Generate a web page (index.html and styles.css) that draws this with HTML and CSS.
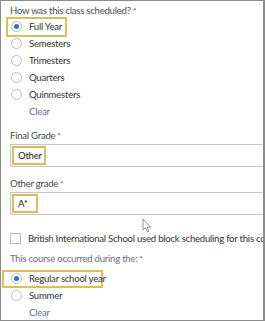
FILE: index.html
```html
<!DOCTYPE html>
<html lang="en">
<head>
  <meta charset="UTF-8">
  <title>Course form</title>
  <link rel="stylesheet" href="styles.css">
</head>
<body>
  <div class="frame">
    <div class="field">
      <p class="label">How was this class scheduled? <span class="req">*</span></p>
      <div class="option"><span class="hl hl-radio"><span class="radio checked"></span>Full Year</span></div>
      <div class="option"><span class="radio"></span>Semesters</div>
      <div class="option"><span class="radio"></span>Trimesters</div>
      <div class="option"><span class="radio"></span>Quarters</div>
      <div class="option"><span class="radio"></span>Quinmesters</div>
      <a class="clear" href="#">Clear</a>
    </div>

    <div class="field">
      <p class="label">Final Grade <span class="req">*</span></p>
      <div class="input"><span class="hl hl-input hl-other">Other</span></div>
    </div>

    <div class="field">
      <p class="label">Other grade <span class="req">*</span></p>
      <div class="input"><span class="hl hl-input hl-grade">A*</span></div>
      <!-- mouse pointer over the page -->
      <svg class="cursor" width="11" height="16" viewBox="0 0 11 16">
        <path d="M1 1 L1 12 L3.5 9.5 L5.5 14 L7 13.3 L5 9 L8.5 9 Z" fill="#fff" stroke="#777" stroke-width="0.8"/>
      </svg>
    </div>

    <div class="check-row">
      <span class="checkbox"></span>British International School used block scheduling for this course
    </div>

    <div class="field field-period">
      <p class="label faded">This course occurred during the: <span class="req">*</span></p>
      <div class="option first"><span class="hl hl-wide"><span class="radio checked"></span>Regular school year</span></div>
      <div class="option"><span class="radio"></span>Summer</div>
      <a class="clear" href="#">Clear</a>
    </div>
  </div>
</body>
</html>
```

FILE: styles.css
```css
body {
  margin: 0;
  font-family: 'Lato', 'Liberation Sans', sans-serif;
  font-size: 9.6px;
  letter-spacing: -0.25px;
  color: #333;
  background: #fff;
}
.frame {
  box-sizing: border-box;
  width: 265px;
  height: 321px;
  border: 1px solid #8c8c8c;
  border-right-width: 2px;
  padding: 2px 0 0 9px;
  overflow: hidden;
  position: relative;
}
.field {
  position: relative;
}
.label {
  margin: 0;
  height: 15px;
  line-height: 15px;
  color: #4a4a4a;
  white-space: nowrap;
}
.label.faded {
  color: #6e6e80;
}
.req {
  color: #c0392b;
  font-size: 8px;
}
.option {
  display: flex;
  align-items: center;
  height: 17px;
  white-space: nowrap;
}
.radio {
  box-sizing: border-box;
  width: 11px;
  height: 11px;
  border: 1px solid #bbb;
  border-radius: 50%;
  margin: 0 7px 0 1px;
  flex: none;
  position: relative;
}
.radio.checked::after {
  content: "";
  position: absolute;
  top: 2px;
  left: 2px;
  width: 5px;
  height: 5px;
  border-radius: 50%;
  background: #2f72c4;
}
/* gold highlight boxes */
.hl {
  box-sizing: border-box;
  border: 2px solid #d8bf5b;
  display: inline-flex;
  align-items: center;
}
.hl-radio {
  margin-left: -4px;
  padding-left: 2px;
  width: 61px;
  height: 20px;
}
.hl-wide {
  margin-left: -8px;
  padding-left: 6px;
  width: 101px;
  height: 18px;
}
.clear {
  display: block;
  margin: 2px 0 0 19px;
  height: 14px;
  line-height: 14px;
  color: #5f6fa3;
  text-decoration: none;
}
.field + .field {
  margin-top: 9px;
}
.input {
  box-sizing: border-box;
  width: 300px;
  height: 23px;
  margin-top: 1px;
  border: 1px solid #c8c8c8;
  padding: 1px 0 0 1px;
}
.hl-input {
  height: 19px;
  padding: 0 4px;
  color: #222;
}
.hl-other {
  width: 34px;
}
.hl-grade {
  width: 26px;
}
.cursor {
  position: absolute;
  left: 132px;
  top: 42px;
}
.check-row {
  display: flex;
  align-items: center;
  height: 16px;
  margin-top: 15px;
  white-space: nowrap;
}
.checkbox {
  box-sizing: border-box;
  width: 11px;
  height: 11px;
  border: 1px solid #bbb;
  margin-right: 7px;
  flex: none;
}
.field-period {
  margin-top: 5px;
}
.field-period .option.first {
  margin-top: 4px;
}
```
